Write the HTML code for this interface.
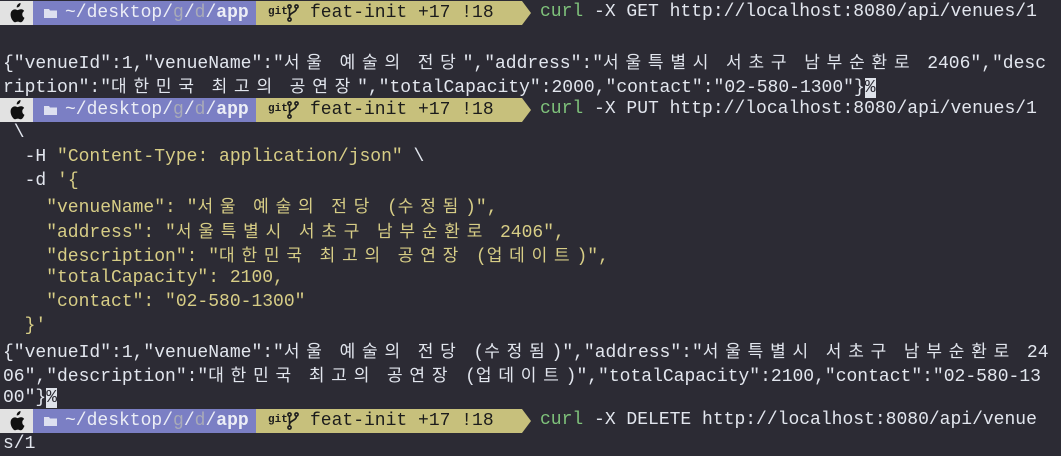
<!DOCTYPE html>
<html><head><meta charset="utf-8"><style>
html,body{margin:0;padding:0;background:#2c2b34;width:1061px;height:456px;overflow:hidden}
body{font-family:"Liberation Mono","Noto Sans CJK KR",monospace;font-size:18px;color:#e2e6ee;position:relative}
.l{position:absolute;left:3px;height:24px;line-height:24px;white-space:pre}
.k{font-family:"Noto Sans CJK KR",sans-serif;font-size:17px;letter-spacing:6.8px;font-weight:normal}
.y{color:#d7cd86}
.gr{color:#7fc27b}
.bar{position:absolute;left:0;height:24px;width:540px}
.a{position:absolute;left:0;top:0;width:33px;height:24px;background:#e2e2e2}
.b{position:absolute;left:33px;top:0;width:223px;height:24px;background:#7b7fc4;color:#eceef6;line-height:24px;white-space:pre}
.c{position:absolute;left:256px;top:0;width:266px;height:24px;background:#c7c07c;color:#1c1c1c;line-height:24px;white-space:pre}
.tip{position:absolute;left:522px;top:0;width:0;height:0;border-top:12px solid transparent;border-bottom:12px solid transparent;border-left:9px solid #c7c07c}
.dim{color:#a9abb8}
.cmd{position:absolute;left:540px;height:24px;line-height:24px;white-space:pre}
.pc{background:#dfe3ea;color:#2c2b34}
</style></head><body>

<div class="bar" style="top:1px">
 <div class="a"><svg width="33" height="24" viewBox="0 0 33 24"><path d="M19.5 5.2c.9-1 1.1-2.1 1-3.2-1 .1-2.1.7-2.8 1.5-.6.7-1.1 1.8-1 2.9 1.1.1 2.1-.5 2.8-1.2zM22.3 13.3c0-2.2 1.8-3.2 1.9-3.3-1-1.5-2.6-1.7-3.2-1.7-1.3-.1-2.6.8-3.3.8-.7 0-1.7-.8-2.8-.7-1.5 0-2.8.8-3.6 2.1-1.5 2.6-.4 6.5 1.1 8.6.7 1 1.6 2.2 2.7 2.2 1.1-.1 1.5-.7 2.8-.7 1.3 0 1.7.7 2.8.7 1.2 0 1.9-1.1 2.6-2.1.8-1.2 1.2-2.3 1.2-2.4-.1 0-2.3-.9-2.2-3.5z" fill="#111"/></svg></div>
 <div class="b"><svg style="position:absolute;left:11px;top:7px" width="13" height="10" viewBox="0 0 13 10"><path d="M0 1h5l1 1.5h7V10H0z" fill="#dde0f0"/></svg><span style="position:absolute;left:32px">~/desktop/<span class="dim">g</span>/<span class="dim">d</span>/<b>app</b></span></div>
 <div class="c"><span style="position:absolute;left:12px;font-size:11px;font-weight:bold;top:-1px">git</span><svg style="position:absolute;left:31px;top:3px" width="12" height="18" viewBox="0 0 12 18"><g fill="none" stroke="#1c1c1c" stroke-width="1.6"><circle cx="2.5" cy="2.5" r="1.6"/><circle cx="9.5" cy="2.5" r="1.6"/><circle cx="2.5" cy="15.5" r="1.6"/><path d="M2.5 4v10M9.5 4c0 5-7 4-7 9"/></g></svg><span style="position:absolute;left:54px">feat-init +17 !18</span></div>
 <div class="tip"></div>
</div>
<div class="cmd" style="top:0"><span class="gr">curl</span> -X GET http://localhost:8080/api/venues/1</div>

<div class="l" style="top:49px">{"venueId":1,"venueName":"<b class="k">서울</b> <b class="k">예술의</b> <b class="k">전당</b>","address":"<b class="k">서울특별시</b> <b class="k">서초구</b> <b class="k">남부순환로</b> 2406","desc</div>
<div class="l" style="top:73px">ription":"<b class="k">대한민국</b> <b class="k">최고의</b> <b class="k">공연장</b>","totalCapacity":2000,"contact":"02-580-1300"}<span class="pc">%</span></div>

<div class="bar" style="top:98px">
 <div class="a"><svg width="33" height="24" viewBox="0 0 33 24"><path d="M19.5 5.2c.9-1 1.1-2.1 1-3.2-1 .1-2.1.7-2.8 1.5-.6.7-1.1 1.8-1 2.9 1.1.1 2.1-.5 2.8-1.2zM22.3 13.3c0-2.2 1.8-3.2 1.9-3.3-1-1.5-2.6-1.7-3.2-1.7-1.3-.1-2.6.8-3.3.8-.7 0-1.7-.8-2.8-.7-1.5 0-2.8.8-3.6 2.1-1.5 2.6-.4 6.5 1.1 8.6.7 1 1.6 2.2 2.7 2.2 1.1-.1 1.5-.7 2.8-.7 1.3 0 1.7.7 2.8.7 1.2 0 1.9-1.1 2.6-2.1.8-1.2 1.2-2.3 1.2-2.4-.1 0-2.3-.9-2.2-3.5z" fill="#111"/></svg></div>
 <div class="b"><svg style="position:absolute;left:11px;top:7px" width="13" height="10" viewBox="0 0 13 10"><path d="M0 1h5l1 1.5h7V10H0z" fill="#dde0f0"/></svg><span style="position:absolute;left:32px">~/desktop/<span class="dim">g</span>/<span class="dim">d</span>/<b>app</b></span></div>
 <div class="c"><span style="position:absolute;left:12px;font-size:11px;font-weight:bold;top:-1px">git</span><svg style="position:absolute;left:31px;top:3px" width="12" height="18" viewBox="0 0 12 18"><g fill="none" stroke="#1c1c1c" stroke-width="1.6"><circle cx="2.5" cy="2.5" r="1.6"/><circle cx="9.5" cy="2.5" r="1.6"/><circle cx="2.5" cy="15.5" r="1.6"/><path d="M2.5 4v10M9.5 4c0 5-7 4-7 9"/></g></svg><span style="position:absolute;left:54px">feat-init +17 !18</span></div>
 <div class="tip"></div>
</div>
<div class="cmd" style="top:97px"><span class="gr">curl</span> -X PUT http://localhost:8080/api/venues/1</div>

<div class="l" style="top:121px"> \</div>
<div class="l" style="top:145px">  -H <span class="y">"Content-Type: application/json"</span> \</div>
<div class="l" style="top:169px">  -d <span class="y">'{</span></div>
<div class="l y" style="top:193px">    "venueName": "<b class="k">서울</b> <b class="k">예술의</b> <b class="k">전당</b> (<b class="k">수정됨</b>)",</div>
<div class="l y" style="top:218px">    "address": "<b class="k">서울특별시</b> <b class="k">서초구</b> <b class="k">남부순환로</b> 2406",</div>
<div class="l y" style="top:242px">    "description": "<b class="k">대한민국</b> <b class="k">최고의</b> <b class="k">공연장</b> (<b class="k">업데이트</b>)",</div>
<div class="l y" style="top:266px">    "totalCapacity": 2100,</div>
<div class="l y" style="top:290px">    "contact": "02-580-1300"</div>
<div class="l y" style="top:314px">  }'</div>
<div class="l" style="top:338px">{"venueId":1,"venueName":"<b class="k">서울</b> <b class="k">예술의</b> <b class="k">전당</b> (<b class="k">수정됨</b>)","address":"<b class="k">서울특별시</b> <b class="k">서초구</b> <b class="k">남부순환로</b> 24</div>
<div class="l" style="top:362px">06","description":"<b class="k">대한민국</b> <b class="k">최고의</b> <b class="k">공연장</b> (<b class="k">업데이트</b>)","totalCapacity":2100,"contact":"02-580-13</div>
<div class="l" style="top:386px">00"}<span class="pc">%</span></div>

<div class="bar" style="top:409px">
 <div class="a"><svg width="33" height="24" viewBox="0 0 33 24"><path d="M19.5 5.2c.9-1 1.1-2.1 1-3.2-1 .1-2.1.7-2.8 1.5-.6.7-1.1 1.8-1 2.9 1.1.1 2.1-.5 2.8-1.2zM22.3 13.3c0-2.2 1.8-3.2 1.9-3.3-1-1.5-2.6-1.7-3.2-1.7-1.3-.1-2.6.8-3.3.8-.7 0-1.7-.8-2.8-.7-1.5 0-2.8.8-3.6 2.1-1.5 2.6-.4 6.5 1.1 8.6.7 1 1.6 2.2 2.7 2.2 1.1-.1 1.5-.7 2.8-.7 1.3 0 1.7.7 2.8.7 1.2 0 1.9-1.1 2.6-2.1.8-1.2 1.2-2.3 1.2-2.4-.1 0-2.3-.9-2.2-3.5z" fill="#111"/></svg></div>
 <div class="b"><svg style="position:absolute;left:11px;top:7px" width="13" height="10" viewBox="0 0 13 10"><path d="M0 1h5l1 1.5h7V10H0z" fill="#dde0f0"/></svg><span style="position:absolute;left:32px">~/desktop/<span class="dim">g</span>/<span class="dim">d</span>/<b>app</b></span></div>
 <div class="c"><span style="position:absolute;left:12px;font-size:11px;font-weight:bold;top:-1px">git</span><svg style="position:absolute;left:31px;top:3px" width="12" height="18" viewBox="0 0 12 18"><g fill="none" stroke="#1c1c1c" stroke-width="1.6"><circle cx="2.5" cy="2.5" r="1.6"/><circle cx="9.5" cy="2.5" r="1.6"/><circle cx="2.5" cy="15.5" r="1.6"/><path d="M2.5 4v10M9.5 4c0 5-7 4-7 9"/></g></svg><span style="position:absolute;left:54px">feat-init +17 !18</span></div>
 <div class="tip"></div>
</div>
<div class="cmd" style="top:408px"><span class="gr">curl</span> -X DELETE http://localhost:8080/api/venue</div>
<div class="l" style="top:432px">s/1</div>

</body></html>
